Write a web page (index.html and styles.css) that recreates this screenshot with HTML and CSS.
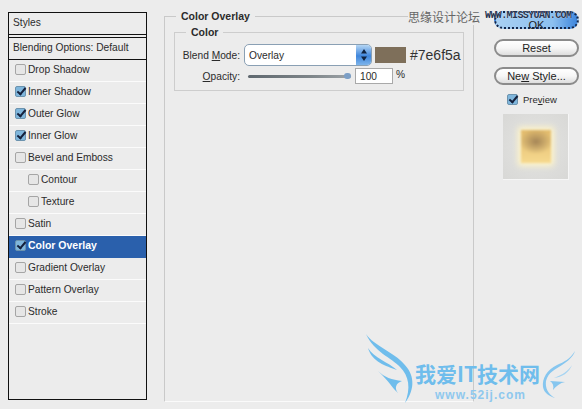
FILE: index.html

```html
<!DOCTYPE html>
<html lang="en">
<head>
  <meta charset="UTF-8">
  <meta name="viewport" content="width=device-width, initial-scale=1.0">
  <title>Layer Style</title>

  <link rel="stylesheet" href="styles.css">
</head>

<body>
  <div class="dialog">
    <div class="styles-panel">
      <div class="panel-title">Styles</div>
      <div class="panel-blending">Blending Options: Default</div>
      <ul class="style-list">
        <li><span class="check"></span>Drop Shadow</li>
        <li><span class="check on"></span>Inner Shadow</li>
        <li><span class="check on"></span>Outer Glow</li>
        <li><span class="check on"></span>Inner Glow</li>
        <li><span class="check"></span>Bevel and Emboss</li>
        <li class="sub"><span class="check"></span>Contour</li>
        <li class="sub"><span class="check"></span>Texture</li>
        <li><span class="check"></span>Satin</li>
        <li class="active"><span class="check on"></span>Color Overlay</li>
        <li><span class="check"></span>Gradient Overlay</li>
        <li><span class="check"></span>Pattern Overlay</li>
        <li><span class="check"></span>Stroke</li>
      </ul>
    </div>

    <div class="overlay-group">
      <div class="group-title">Color Overlay</div>
      <div class="color-group">
        <div class="color-title">Color</div>
        <div class="form-row">
          <span class="form-label">Blend <u>M</u>ode:</span>
          <div class="select">
            <span class="select-value">Overlay</span>
            <span class="select-arrows">
              <svg width="8" height="14" viewBox="0 0 8 14"><path d="M4 1 7 5.500H1zM4 13 1 8.500H7z" fill="#10233f"/></svg>
            </span>
          </div>
          <span class="swatch"></span>
          <span class="hex">#7e6f5a</span>
        </div>
        <div class="form-row opacity-row">
          <span class="form-label"><u>O</u>pacity:</span>
          <div class="slider"><span class="slider-knob"></span></div>
          <span class="num-input">100</span>
          <span class="percent">%</span>
        </div>
      </div>
    </div>

    <div class="actions">
      <button type="button" class="btn btn-ok">OK</button>
      <button type="button" class="btn">Reset</button>
      <button type="button" class="btn">Ne<u>w</u> Style...</button>
      <div class="preview-check"><span class="check on big"></span>Pre<u>v</u>iew</div>
      <div class="preview-box"><div class="preview-swatch"></div></div>
    </div>
  </div>

  <!-- site watermarks on top of the screenshot -->
  <div class="mark-cn">思缘设计论坛</div>
  <div class="mark-url">WWW.MISSYUAN.COM</div>
  <div class="mark-logo">
    <svg class="wing wing-left" width="56" height="74" viewBox="0 0 56 74">
      <path d="M2 2C10 14 30 20 40 32 50 42 52 56 41 71 47 56 45 44 36 35 28 26 10 20 2 2Z" fill="#6fbdec"/>
      <path d="M4 16C10 26 24 30 33 38 22 34 8 30 4 16Z" fill="#6fbdec"/>
      <path d="M14 39C20 45 28 48 38 49 32 51 30 56 34 61 28 56 26 50 14 39Z" fill="#6fbdec"/>
    </svg>
    <svg class="wing wing-right" width="38" height="50" viewBox="0 0 38 50">
      <path d="M35 1C30 9 24 12 17 15 7 20 2 28 3 37 4 43 9 46 15 48 8 44 5 38 6 31 8 22 16 19 22 15 28 11 33 7 35 1Z" fill="#86c6ef"/>
      <path d="M32 15C28 21 22 25 14 28 22 27 29 23 32 15Z" fill="#a5d4f2"/>
      <path d="M25 32C20 32 15 31 10 31 13 33 14 36 13 40 16 36 20 33 25 32Z" fill="#86c6ef"/>
    </svg>
    <div class="logo-cn">我爱IT技术网</div>
    <div class="logo-url">www.52ij.com</div>
  </div>
</body>
</html>
```

FILE: styles.css

```css
body {
  margin: 0;
  width: 582px;
  height: 409px;
  overflow: hidden;
  background-color: #ececec;
  font-family: 'Liberation Sans', sans-serif;
  font-size: 10.200px;
  color: #2b2b2b;
  position: relative;
}

.dialog {
  display: flex;
  align-items: flex-start;
  padding: 11px 0 0 8px;
}

/* left list */
.styles-panel {
  width: 137px;
  height: 386px;
  margin-top: 1px;
  border: 1px solid #111;
  flex-shrink: 0;
}

.panel-title {
  height: 21px;
  line-height: 19px;
  padding-left: 4px;
  border-bottom: 1px solid #111;
}

.panel-blending {
  height: 21px;
  line-height: 19px;
  margin-top: 2px;
  padding-left: 4px;
  border-top: 1px solid #111;
  border-bottom: 1px solid #111;
  white-space: nowrap;
}

.style-list {
  list-style: none;
  margin: 0;
  padding: 0;
}

.style-list li {
  height: 19px;
  padding: 0 0 2px 6px;
  border-bottom: 1px solid #fbfbfb;
  display: flex;
  align-items: center;
}

.style-list li.sub {
  padding-left: 19px;
}

.style-list li.active {
  height: 18px;
  padding-bottom: 3px;
  background-color: #2a60ac;
  border-bottom-color: #2a60ac;
  color: #fff;
  font-size: 10.500px;
  font-weight: bold;
}

.check {
  width: 9px;
  height: 9px;
  margin-right: 2px;
  border: 1px solid #a5a5a5;
  border-radius: 2px;
  background-color: #e6e6e6;
  flex-shrink: 0;
  position: relative;
}

.check.on {
  background-color: #7fb6dc;
  border-color: #6c93ae;
}

.check.on::after {
  content: "";
  position: absolute;
  left: 3px;
  top: -1px;
  width: 3px;
  height: 7px;
  border-right: 2px solid #14203c;
  border-bottom: 2px solid #14203c;
  transform: rotate(40deg);
}

.check.big {
  margin-right: 5px;
}

/* middle group */
.overlay-group {
  width: 310px;
  height: 386px;
  margin: 5px 0 0 17px;
  padding: 0 9px;
  box-sizing: border-box;
  border: 1px solid #c9c9c9;
  border-bottom-color: #fafafa;
  position: relative;
  flex-shrink: 0;
}

.group-title {
  position: absolute;
  top: -7px;
  left: 11px;
  padding: 0 5px;
  background-color: #ececec;
  font-weight: bold;
  font-size: 10.500px;
}

.color-group {
  margin-top: 15px;
  height: 57px;
  border: 1px solid #cdcdcd;
  position: relative;
}

.color-title {
  position: absolute;
  top: -7px;
  left: 11px;
  padding: 0 5px;
  background-color: #ececec;
  font-weight: bold;
  font-size: 10.500px;
}

.form-row {
  display: flex;
  align-items: center;
  height: 22px;
  margin-top: 11px;
}

.opacity-row {
  margin-top: 2px;
  height: 16px;
}

.form-label {
  width: 65px;
  text-align: right;
  flex-shrink: 0;
}

.select {
  width: 128px;
  height: 22px;
  margin-left: 4px;
  box-sizing: border-box;
  border: 1px solid #8aa0b4;
  border-radius: 5px;
  background-color: #fff;
  display: flex;
  justify-content: space-between;
  align-items: center;
  padding-left: 4px;
  overflow: hidden;
  flex-shrink: 0;
}

.select-arrows {
  width: 15px;
  height: 20px;
  background: linear-gradient(#b5d6f4, #3f86dc 55%, #7db4ea);
  display: flex;
  align-items: center;
  justify-content: center;
}

.swatch {
  width: 31px;
  height: 16px;
  margin-left: 3px;
  background-color: #7e6f5a;
  flex-shrink: 0;
}

.hex {
  margin-left: 4px;
  font-size: 14px;
  color: #333;
}

.slider {
  width: 103px;
  height: 3px;
  margin: 0 4px 0 8px;
  border-radius: 2px;
  background: linear-gradient(to right, #5f686f, #7d8488 60%, #9ea4a8);
  position: relative;
  flex-shrink: 0;
}

.slider-knob {
  position: absolute;
  right: 0;
  top: -2px;
  width: 7px;
  height: 6px;
  border-radius: 3px;
  background-color: #7c9fc6;
}

.num-input {
  width: 32px;
  height: 14px;
  line-height: 15px;
  padding-left: 4px;
  background-color: #fff;
  border: 1px solid #a9a9a9;
}

.percent {
  margin: -3px 0 0 3px;
}

/* right column */
.actions {
  width: 85px;
  margin-left: 20px;
  display: flex;
  flex-direction: column;
  flex-shrink: 0;
}

.btn {
  width: 85px;
  height: 18px;
  padding: 0;
  margin-bottom: 10px;
  box-sizing: border-box;
  border: 2px solid #8b8b8b;
  border-radius: 9px;
  background: linear-gradient(#fff, #f6f6f6 50%, #dedede);
  font-family: 'Liberation Sans', sans-serif;
  font-size: 11px;
  color: #222;
}

.btn-ok {
  padding-top: 6px;
  background: linear-gradient(to right, #a9d0f2, #8cc0f0 70%, #3f86dc);
  border: 2px dotted #12264a;
}

.preview-check {
  display: flex;
  align-items: center;
  margin-top: -1px;
  padding-left: 13px;
  font-size: 9.500px;
}

.preview-box {
  width: 65px;
  height: 65px;
  margin: 9px 0 0 9px;
  background: radial-gradient(circle, #e4e4e2, #d8d8d6);
  border-right: 1px solid #f6f6f6;
  border-bottom: 1px solid #f6f6f6;
  display: flex;
  align-items: center;
  justify-content: center;
}

.preview-swatch {
  width: 30px;
  height: 33px;
  background: radial-gradient(ellipse 55% 38% at 50% 35%, #a58657, transparent), linear-gradient(#e2bb6c, #f6d98f);
  box-shadow: 0 0 6px 3px #fff5c8;
  filter: blur(1px);
}

/* watermarks */
.mark-cn {
  position: absolute;
  left: 408px;
  top: 8px;
  font-family: 'Noto Sans CJK SC', sans-serif;
  font-size: 12px;
  color: #666;
  background-color: #ececec;
}

.mark-url {
  position: absolute;
  left: 485px;
  top: 10px;
  font-family: 'Liberation Mono', monospace;
  font-size: 10px;
  font-weight: bold;
  letter-spacing: -0.600px;
  color: #25344f;
  text-shadow: 0 0 1px #fff;
  white-space: nowrap;
}

.mark-logo {
  position: absolute;
  left: 364px;
  top: 332px;
  width: 218px;
  height: 77px;
}

.wing {
  position: absolute;
}

.wing-left {
  left: 0;
  top: 0;
}

.wing-right {
  left: 176px;
  top: 18px;
}

.logo-cn {
  position: absolute;
  left: 51px;
  top: 28px;
  font-family: 'Noto Sans CJK SC', sans-serif;
  font-size: 21px;
  font-weight: bold;
  line-height: 26px;
  color: #6fbdec;
  white-space: nowrap;
}

.logo-url {
  position: absolute;
  left: 71px;
  top: 56px;
  font-size: 12px;
  font-weight: bold;
  letter-spacing: 1px;
  color: #8fc8ee;
}
```
